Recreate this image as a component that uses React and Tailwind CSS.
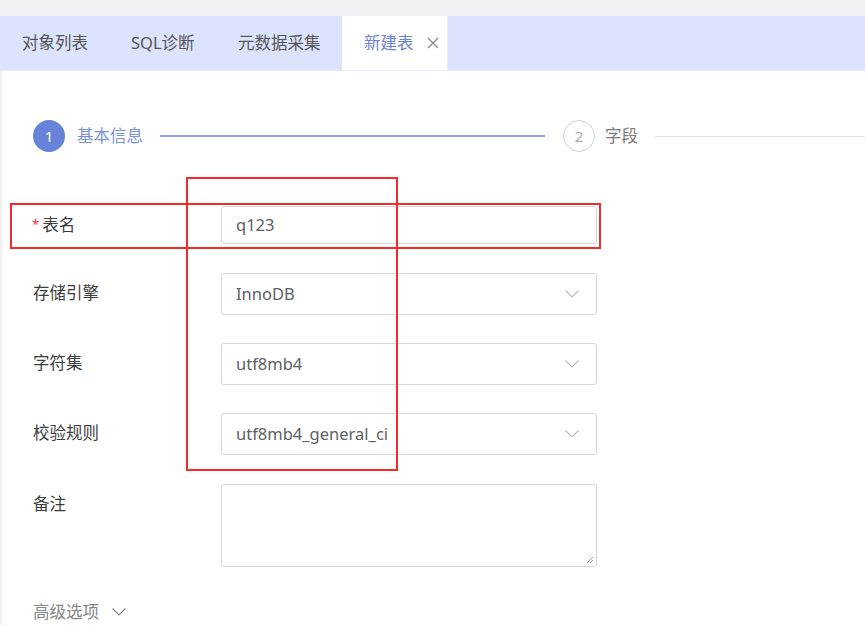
import React from "react";

const font = { fontFamily: '"Noto Sans", "Noto Sans CJK SC", sans-serif' };

function Chevron({ className = "" }) {
  return (
    <svg className={className} width="16" height="10" viewBox="0 0 16 10" fill="none">
      <path d="M1.5 1.5 L8 8 L14.5 1.5" stroke="currentColor" strokeWidth="1.2" />
    </svg>
  );
}

function Select({ value }) {
  return (
    <div className="w-[376px] h-[42px] border border-[#d5d6da] rounded-[3px] flex items-center justify-between pl-[14px] pr-[16px] text-[16.5px] text-[#5c5f63]">
      <span>{value}</span>
      <Chevron className="text-[#b9bcc2]" />
    </div>
  );
}

function Label({ children }) {
  return (
    <div className="w-[188px] h-[40px] flex items-center text-[16.5px] text-[#3d3d3d]">{children}</div>
  );
}

export default function App() {
  return (
    <div className="relative w-[865px] h-[625px] overflow-hidden bg-[#eef0f4] pt-[16px]" style={font}>
      <div className="h-full bg-white border-l-2 border-[#eef0f4]">
        {/* Tab bar */}
        <div className="h-[55px] bg-[#dce4fd] flex border-b border-[#e8ecf8] ml-[-2px] text-[16.5px]">
          <div className="w-[110px] pl-[22px] flex items-center text-[#555]">对象列表</div>
          <div className="w-[107px] pl-[21px] flex items-center text-[#555]">SQL诊断</div>
          <div className="w-[125px] pl-[21px] flex items-center text-[#555]">元数据采集</div>
          <div className="w-[106px] pl-[22px] flex items-center bg-white text-[#6b80d8] border-r border-[#e8ecf8]">
            <span>新建表</span>
            <span className="ml-[13px] text-[#8a8a8a]">
              <svg width="12" height="12" viewBox="0 0 12 12">
                <path d="M1 1 L11 11 M11 1 L1 11" stroke="currentColor" strokeWidth="1.3" />
              </svg>
            </span>
          </div>
        </div>

        {/* Steps */}
        <div className="flex items-center pl-[31px] pt-[49px]">
          <div className="w-[32px] h-[32px] rounded-full bg-[#6782d9] text-white flex items-center justify-center text-[15px]">1</div>
          <div className="ml-[12px] text-[16.5px] text-[#7c91dd]">基本信息</div>
          <div className="ml-[17px] w-[385px] h-[2px] bg-[#8ea2e8]"></div>
          <div className="ml-[18px] w-[32px] h-[32px] rounded-full border-[1.5px] border-[#d2d2d2] text-[#aaa] flex items-center justify-center text-[15px]">2</div>
          <div className="ml-[10px] text-[16.5px] text-[#7a7a7a]">字段</div>
          <div className="ml-[17px] flex-1 h-px bg-[#e4e4e4]"></div>
        </div>

        {/* Form */}
        <div className="pl-[31px] pt-[54px]">
          <div className="flex items-start">
            <div className="w-[188px] h-[38px] flex items-center text-[16.5px] text-[#3d3d3d]">
              <span className="text-[#f03030] text-[13px] mr-[3px] ml-[-1px]">*</span>表名
            </div>
            <div className="w-[376px] h-[38px] border border-[#d5d6da] rounded-[3px] flex items-center pl-[14px] text-[16.5px] text-[#5c5f63]">q123</div>
          </div>
          <div className="flex items-start mt-[29px]">
            <Label>存储引擎</Label>
            <Select value="InnoDB" />
          </div>
          <div className="flex items-start mt-[28px]">
            <Label>字符集</Label>
            <Select value="utf8mb4" />
          </div>
          <div className="flex items-start mt-[28px]">
            <Label>校验规则</Label>
            <Select value="utf8mb4_general_ci" />
          </div>
          <div className="flex items-start mt-[29px]">
            <Label>备注</Label>
            <div className="relative w-[376px] h-[83px] border border-[#d5d6da] rounded-[3px]">
              <svg className="absolute right-[2px] bottom-[2px]" width="10" height="10" viewBox="0 0 10 10">
                <path d="M9 3 L3 9 M9 6 L6 9" stroke="#999" strokeWidth="1" />
              </svg>
            </div>
          </div>
          <div className="flex items-center mt-[33px] text-[16.5px] text-[#858585]">
            <span>高级选项</span>
            <Chevron className="ml-[12px] text-[#858585]" />
          </div>
        </div>
      </div>

      {/* Red annotation boxes */}
      <div className="absolute left-[10px] top-[203px] w-[591px] h-[46px] border-2 border-[#f52a2a] pointer-events-none"></div>
      <div className="absolute left-[186px] top-[177px] w-[212px] h-[294px] border-2 border-[#f52a2a] pointer-events-none"></div>
    </div>
  );
}
